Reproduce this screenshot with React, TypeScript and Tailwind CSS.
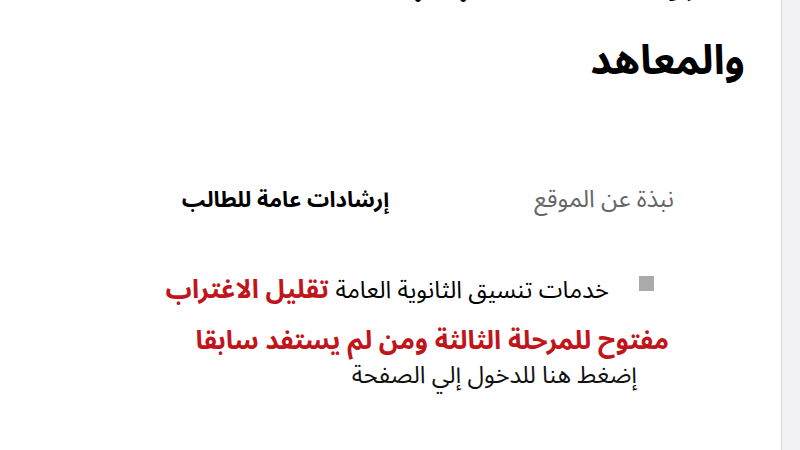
import React from "react";

export default function App() {
  return (
    <div className="flex h-[450px] w-[800px] overflow-hidden bg-white" style={{ fontFamily: '"Noto Sans Arabic", "DejaVu Sans", sans-serif' }}>
      <main dir="rtl" className="flex-1 overflow-hidden pr-[34px]">
        <h1 className="-mt-[62px] pr-[2px] text-[41px] font-bold leading-[82px] text-black">
          شروط الالتحاق بالجامعات
          <br />
          والمعاهد
        </h1>
        <ul className="mt-[83px] flex items-center gap-[145px] pr-[73px] leading-[30px]">
          <li className="text-[24px] text-[#666]">نبذة عن الموقع</li>
          <li className="text-[22px] font-bold text-black">إرشادات عامة للطالب</li>
        </ul>
        <div className="mt-[50px] pr-[78px]">
          <p className="text-[26px] leading-[50px]">
            <span className="mr-[15px] ml-[30px] inline-block h-[15px] w-[15px] bg-[#aaaaaa] align-[7px]" />
            <span className="text-[24px] text-black">خدمات تنسيق الثانوية العامة</span>{" "}
            <span className="font-bold text-[#c0161b]">تقليل الاغتراب</span>
            <br />
            <span className="font-bold text-[#c0161b]">مفتوح للمرحلة الثالثة ومن لم يستفد سابقا</span>
          </p>
          <p className="pr-[32px] text-[24px] leading-[20px] text-[#111]">إضغط هنا للدخول إلي الصفحة</p>
        </div>
      </main>
      <aside className="h-full w-[19px] border-l border-[#d6d6d8] bg-[#f2f2f4]" />
    </div>
  );
}
